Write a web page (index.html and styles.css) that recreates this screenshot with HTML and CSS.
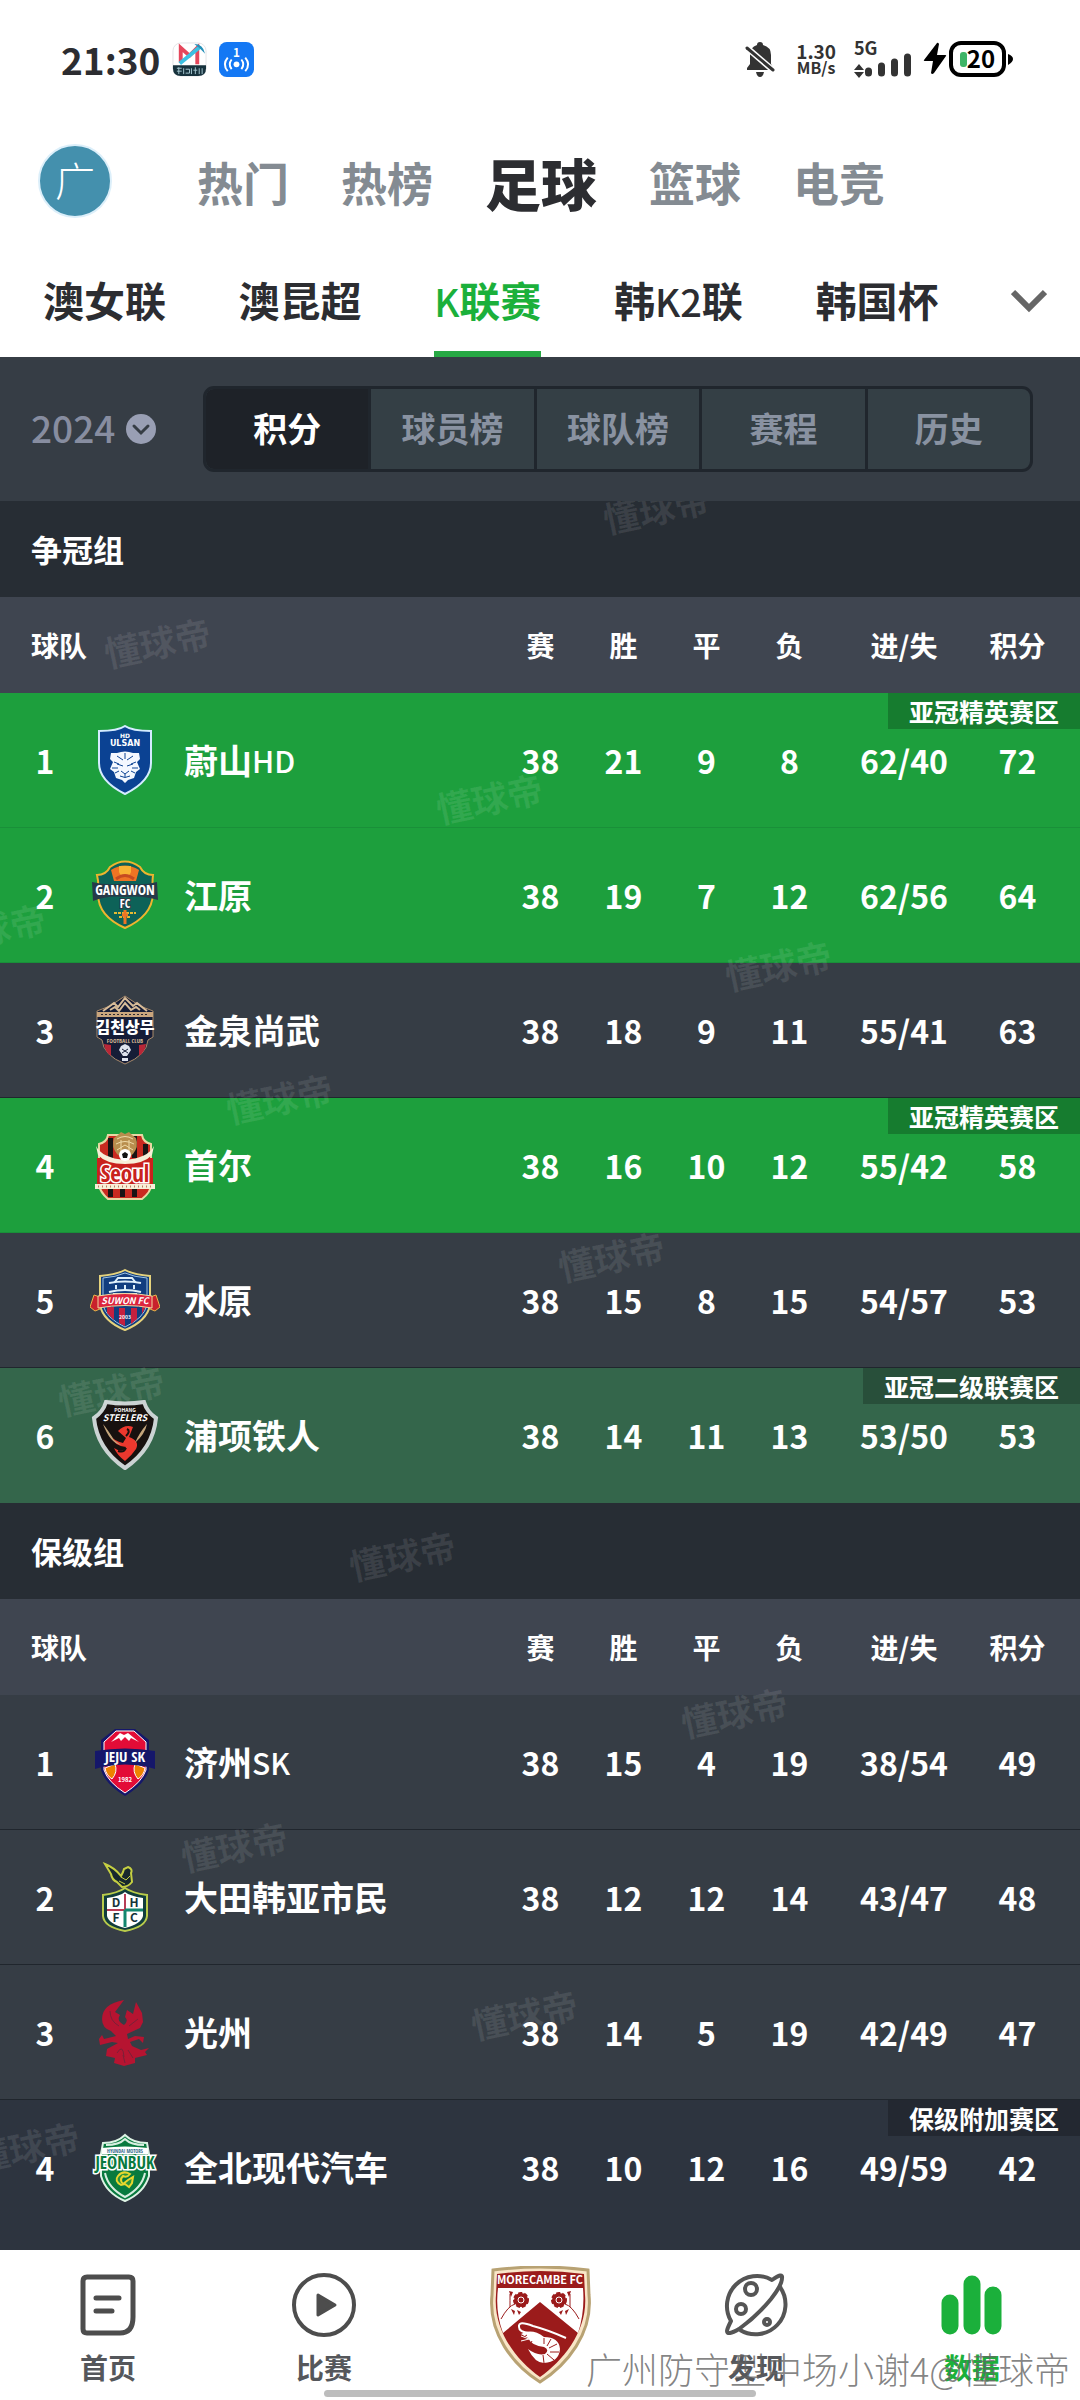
FILE: index.html
```html
<!DOCTYPE html>
<html lang="zh-CN">
<head>
  <meta charset="UTF-8">
  <meta name="viewport" content="width=device-width, initial-scale=1.0">
  <title>K联赛 积分榜</title>
  <link rel="stylesheet" href="styles.css">
</head>
<body>
  <div class="status-bar">
    <span class="clock">21:30</span>
    <svg class="app-icon" viewBox="0 0 36 36">
      <rect x="1" y="1" width="34" height="34" rx="8" fill="#fff" stroke="#e3e3e6"/>
      <path d="M1 24H35V27Q35 35 27 35H9Q1 35 1 27Z" fill="#17323d"/>
      <path d="M9 21V6L18 14L26 6V23" fill="none" stroke="#e5475c" stroke-width="4"/>
      <path d="M8 22L29 5" stroke="#3cc0e2" stroke-width="4"/>
      <path d="M23 2Q32 2 34 12L29 7Z" fill="#2590b8"/>
      <path d="M5 27h5M5 30h5M7 26v7M12 27v6M14 28h4v4h-4M20 27v6M22 29h4M24 26v7M28 27v6M31 27v6" fill="none" stroke="#a5c6cf"/>
    </svg>
    <svg class="app-icon" viewBox="0 0 36 36">
      <rect width="36" height="36" rx="8" fill="#1478f4"/>
      <text x="18" y="15" text-anchor="middle" class="icon-text" font-size="12" fill="#fff">1</text>
      <circle cx="18" cy="23" r="3" fill="#fff"/>
      <path d="M13 18Q9 23 13 28M9 16Q3 23 9 30M23 18Q27 23 23 28M27 16Q33 23 27 30" fill="none" stroke="#fff" stroke-width="2"/>
    </svg>
    <div class="status-right">
      <svg class="bell" viewBox="0 0 30 36">
        <path d="M2 29V27L5 23V14Q5 6 12 4Q12 1 15 1Q18 1 18 4Q26 6 26 14V23L29 28V29Z" fill="#333"/>
        <path d="M11 31H19Q18 36 15 36Q12 36 11 31Z" fill="#333"/>
        <path d="M0 5L30 31" stroke="#fff" stroke-width="6"/>
        <path d="M2 7L28 29" stroke="#333" stroke-width="3" stroke-linecap="round"/>
      </svg>
      <div class="speed"><span>1.30</span><small>MB/s</small></div>
      <svg class="signal" viewBox="0 0 58 36">
        <text x="0" y="14" class="icon-text" font-size="18" fill="#333">5G</text>
        <path d="M0 29L5 23L10 29ZM0 31L5 37L10 31Z" fill="#333"/>
        <path d="M14.500 30V32M27.500 25V32M40.500 21V32M53.500 16V32" stroke="#333" stroke-width="7" stroke-linecap="round"/>
      </svg>
      <svg class="battery" viewBox="0 0 90 36">
        <path d="M14 2L1 19Q0 20 2 20H10L8 32Q9 34 11 32L23 15Q24 14 22 14H14L16 3Q15 1 14 2Z" fill="#000"/>
        <rect x="28" y="2" width="53" height="32" rx="10" fill="#fff" stroke="#000" stroke-width="4"/>
        <path d="M85 13Q90 15 90 18Q90 21 85 24Z" fill="#000"/>
        <rect x="37" y="11" width="7" height="15" rx="3" fill="#3fb566"/>
        <text x="58" y="27" text-anchor="middle" class="icon-text" font-size="24" fill="#000">20</text>
      </svg>
    </div>
  </div>

  <nav class="main-tabs">
    <a class="avatar" href="#">广</a>
    <a href="#">热门</a>
    <a href="#">热榜</a>
    <a class="active" href="#">足球</a>
    <a href="#">篮球</a>
    <a href="#">电竞</a>
  </nav>

  <nav class="league-tabs">
    <a href="#">澳女联</a>
    <a href="#">澳昆超</a>
    <a class="active" href="#"><span class="latin">K</span>联赛</a>
    <a href="#">韩<span class="latin">K2</span>联</a>
    <a href="#">韩国杯</a>
    <button class="more" aria-label="更多联赛">
      <svg viewBox="0 0 36 24"><path d="M2 3L18 19L34 3" fill="none" stroke="#666" stroke-width="6"/></svg>
    </button>
  </nav>

  <div class="filters">
    <label class="season">
      <select aria-label="赛季"><option>2024</option></select>
      <svg viewBox="0 0 30 30"><circle cx="15" cy="15" r="15" fill="#999fb4"/><path d="M8 12L15 19L22 12" fill="none" stroke="#363d45" stroke-width="3" stroke-linecap="round"/></svg>
    </label>
    <div class="segments">
      <button class="active">积分</button>
      <button>球员榜</button>
      <button>球队榜</button>
      <button>赛程</button>
      <button>历史</button>
    </div>
  </div>

  <main class="standings">
    <h2>争冠组</h2>
    <table>
      <thead>
        <tr><th class="team">球队</th><th>赛</th><th>胜</th><th>平</th><th>负</th><th class="goals">进/失</th><th class="points">积分</th></tr>
      </thead>
      <tbody>
        <tr class="elite">
          <td><div class="club"><span class="rank">1</span>
            <svg class="crest" viewBox="0 0 70 70">
              <path d="M35 1Q42 6 61 6V38C61 52 49 62 35 69C21 62 9 52 9 38V6Q28 6 35 1Z" fill="#0b4293" stroke="#d4ecff" stroke-width="2"/>
              <text x="35" y="13" text-anchor="middle" class="icon-text wide" font-size="6" fill="#fff">HD</text>
              <text x="35" y="21" text-anchor="middle" class="icon-text wide" font-size="8" fill="#fff">ULSAN</text>
              <path d="M21 28L27 28Q35 25 43 28L49 28L50 34L47 37L50 44L46 47L44 53L38 55L35 58L32 55L26 53L24 47L20 44L23 37L20 34Z" fill="#f4f8ff"/>
              <path d="M27 31L33 35M43 31L37 35M35 28V34M24 37L29 39M46 37L41 39M22 43L28 43M48 43L42 43M25 48L29 46M45 48L41 46M27 39L33 41M43 39L37 41M31 46L35 49L39 46M35 49V52M30 51Q35 54 40 51" fill="none" stroke="#0b4293"/>
            </svg>
            蔚山<span class="latin">HD</span></div></td>
          <td>38</td><td>21</td><td>9</td><td>8</td><td>62/40</td><td class="points">72<span class="zone">亚冠精英赛区</span></td>
        </tr>
        <tr class="elite">
          <td><div class="club"><span class="rank">2</span>
            <svg class="crest" viewBox="0 0 70 70">
              <path d="M20 7Q35 -4 50 7Q54 15 63 15Q62 23 63 34Q62 56 35 68Q8 56 8 34Q9 23 7 15Q16 15 20 7Z" fill="#0d6258" stroke="#efb52e" stroke-width="2"/>
              <path d="M21 10Q35 1 49 10L46 21H24Z" fill="#ee7424"/>
              <path d="M29 6H41V12Q39 17 35 17Q31 17 29 12Z" fill="#f9b233"/>
              <path d="M26 19Q35 12 44 19" fill="none" stroke="#c64b21" stroke-width="3"/>
              <path d="M24 53H46M29 57H41" stroke="#e6bb33" stroke-width="2" stroke-dasharray="3 1"/>
              <path d="M35 50V64M32 55H38" stroke="#ee7424" stroke-width="3"/>
              <path d="M2 22Q18 26 35 23Q52 26 67 22L68 40Q52 35 35 37Q18 35 3 41Z" fill="#263a49"/>
              <text x="35" y="35" text-anchor="middle" class="icon-text narrow" font-size="14" fill="#fff">GANGWON</text>
              <text x="35" y="48" text-anchor="middle" class="icon-text narrow" font-size="12" fill="#fff" stroke="#263a49" stroke-width="2" paint-order="stroke">FC</text>
            </svg>
            江原</div></td>
          <td>38</td><td>19</td><td>7</td><td>12</td><td>62/56</td><td class="points">64</td>
        </tr>
        <tr>
          <td><div class="club"><span class="rank">3</span>
            <svg class="crest" viewBox="0 0 70 70">
              <path d="M35 1L20 11L7 16V42L12 45Q13 60 35 69Q57 60 58 45L63 42V16L50 11Z" fill="#161d37" stroke="#a98b6b"/>
              <path d="M13 16L24 8L28 12L35 3L43 11L47 8L57 16M20 15L25 12L29 16L35 8L41 15L46 12L50 15" fill="none" stroke="#d8bc98" stroke-width="2"/>
              <rect x="7" y="17" width="56" height="5" fill="#c9a57d"/>
              <path d="M11 19.500H59" stroke="#2a2630" stroke-dasharray="2 2"/>
              <text x="35" y="38" text-anchor="middle" class="icon-text korean" font-size="16" fill="#fff">김천상무</text>
              <text x="35" y="48" text-anchor="middle" class="icon-text narrow" font-size="6" fill="#d8bc98">FOOTBALL CLUB</text>
              <path d="M14 49L21 50V61Q15 57 14 49ZM56 49L49 50V61Q55 57 56 49Z" fill="#b82737"/>
              <path d="M31 51L35 49L39 51L41 55L37 61H33L29 55ZM32 63H38V66H32Z" fill="#dfe3ee"/>
              <path d="M32 54L38 58M38 54L32 58" stroke="#161d37"/>
            </svg>
            金泉尚武</div></td>
          <td>38</td><td>18</td><td>9</td><td>11</td><td>55/41</td><td class="points">63</td>
        </tr>
        <tr class="elite">
          <td><div class="club"><span class="rank">4</span>
            <svg class="crest" viewBox="0 0 70 70">
              <path d="M18 5H52Q53 12 61 14V55Q61 62 52 69H18Q10 62 9 55V14Q17 12 18 5Z" fill="#c92a20" stroke="#e8d9a4" stroke-width="2"/>
              <path d="M18 8H23V67H18ZM30 6H35V67H30ZM42 6H47V67H42ZM53 14H58V58H53Z" fill="#191414"/>
              <path d="M24 8L28 5L31 2L35 4L39 2L42 5L46 8Q49 17 43 24L35 30L27 24Q21 17 24 8Z" fill="#b98e4e"/>
              <path d="M27 9Q35 4 43 9M26 14Q35 9 44 14M27 20L35 15L43 20M31 10V22M39 10V22" fill="none" stroke="#f0dba9"/>
              <path d="M7 28H63V54H7Z" fill="#c9221d"/>
              <path d="M6 16Q12 28 35 30Q58 28 64 16L62 25Q54 34 35 34Q16 34 8 25Z" fill="#f7efd8"/>
              <circle cx="35" cy="25" r="6" fill="#fff"/>
              <path d="M35 22L38 24L37 28H33L32 24Z" fill="#111"/>
              <text x="35" y="52" text-anchor="middle" class="icon-text narrow" font-size="23" fill="#c9221d" stroke="#fff" stroke-width="3" paint-order="stroke">Seoul</text>
              <rect x="5" y="54" width="60" height="5" fill="#f7efd8"/>
              <path d="M8 56.500H62" stroke="#bb7d61" stroke-width="2" stroke-dasharray="1 3"/>
            </svg>
            首尔</div></td>
          <td>38</td><td>16</td><td>10</td><td>12</td><td>55/42</td><td class="points">58<span class="zone">亚冠精英赛区</span></td>
        </tr>
        <tr>
          <td><div class="club"><span class="rank">5</span>
            <svg class="crest" viewBox="0 0 70 70">
              <path d="M35 5Q44 10 60 11V40Q57 56 35 65Q13 56 10 40V11Q26 10 35 5Z" fill="#113e7f" stroke="#e6d37c" stroke-width="2"/>
              <path d="M35 8Q44 12 57 13V40Q54 53 35 62Q16 53 13 40V13Q26 12 35 8Z" fill="none" stroke="#9fc4e4"/>
              <path d="M19 18Q35 15 51 18M24 18L28 13H42L46 18M19 27Q35 23 51 27M26 20V24M35 20V24M44 20V24M23 29H47" fill="none" stroke="#dff0fa" stroke-width="2"/>
              <path d="M17 42H24V55L17 48ZM29 43H35V61L29 58ZM41 43H47V54L41 59ZM52 41H56L52 49Z" fill="#c5203f"/>
              <path d="M0 42L4 30L10 32V44L5 46ZM70 42L66 30L60 32V44L65 46Z" fill="#c8212c" stroke="#e6b64a"/>
              <path d="M8 31Q35 26 62 31V43Q35 38 8 43Z" fill="#dc243e" stroke="#f0d9a0"/>
              <text x="35" y="39" text-anchor="middle" class="icon-text slanted" font-size="9" fill="#fff">SUWON FC</text>
              <text x="35" y="54" text-anchor="middle" class="icon-text" font-size="5" fill="#fff">2003</text>
            </svg>
            水原</div></td>
          <td>38</td><td>15</td><td>8</td><td>15</td><td>54/57</td><td class="points">53</td>
        </tr>
        <tr class="second">
          <td><div class="club"><span class="rank">6</span>
            <svg class="crest" viewBox="0 0 70 70">
              <path d="M16 2Q35 5 54 2Q57 12 66 18Q63 49 35 68Q7 49 4 18Q13 12 16 2Z" fill="#17110f" stroke="#cbd3d3" stroke-width="4"/>
              <text x="35" y="12" text-anchor="middle" class="icon-text" font-size="5" fill="#fff">POHANG</text>
              <text x="35" y="21" text-anchor="middle" class="icon-text slanted" font-size="9" fill="#fff">STEELERS</text>
              <path d="M20 35Q24 41 33 43L36 38L28 31Q35 24 43 27L39 37Q50 41 46 49Q42 55 35 61Q27 55 24 48Q33 54 36 47Q24 46 20 35Z" fill="#ec382e"/>
              <path d="M13 24Q18 30 24 40L31 45Q20 43 13 24ZM57 24Q55 34 45 43Q49 33 57 24Z" fill="#c4a57b"/>
              <path d="M37 29Q41 31 36 36M36 48Q34 53 28 51" fill="none" stroke="#17110f" stroke-width="2"/>
            </svg>
            浦项铁人</div></td>
          <td>38</td><td>14</td><td>11</td><td>13</td><td>53/50</td><td class="points">53<span class="zone">亚冠二级联赛区</span></td>
        </tr>
      </tbody>
    </table>

    <h2>保级组</h2>
    <table>
      <thead>
        <tr><th class="team">球队</th><th>赛</th><th>胜</th><th>平</th><th>负</th><th class="goals">进/失</th><th class="points">积分</th></tr>
      </thead>
      <tbody>
        <tr>
          <td><div class="club"><span class="rank">1</span>
            <svg class="crest" viewBox="0 0 70 70">
              <path d="M25 2H45L59 13V43Q55 57 35 69Q15 57 11 43V13Z" fill="#15176a"/>
              <path d="M26 4H44L56 15V43Q52 55 35 66Q18 55 14 43V15Z" fill="#e30c37" stroke="#fff"/>
              <path d="M21 15L30 6L34 8L38 6L49 15L41 11L39 14L35 10L31 14L29 11Z" fill="#fff"/>
              <path d="M15 41L25 37Q28 45 22 52Q16 48 15 41ZM55 41L45 37Q42 45 48 52Q54 48 55 41Z" fill="#ee8200" stroke="#fff"/>
              <path d="M5 24Q35 19 65 24V42L58 40Q35 35 12 40L5 42Z" fill="#15176a"/>
              <text x="35" y="35" text-anchor="middle" class="icon-text narrow" font-size="15" fill="#fff">JEJU SK</text>
              <text x="35" y="55" text-anchor="middle" class="icon-text" font-size="6" fill="#fff">1982</text>
            </svg>
            济州<span class="latin">SK</span></div></td>
          <td>38</td><td>15</td><td>4</td><td>19</td><td>38/54</td><td class="points">49</td>
        </tr>
        <tr>
          <td><div class="club"><span class="rank">2</span>
            <svg class="crest" viewBox="0 0 70 70">
              <path d="M27 20Q22 18 21 12L15 2Q25 6 31 14L33 10L34 7L38 5Q43 7 41 11L42 20Q38 25 32 25Z" fill="#17282d" stroke="#c5cf42" stroke-width="2"/>
              <path d="M31 15L36 18L40 14M29 19L35 22" fill="none" stroke="#c5cf42"/>
              <path d="M13 33Q28 31 35 26Q42 31 57 33V54Q56 65 35 69Q14 65 13 54Z" fill="#113d3c" stroke="#b9cc4b" stroke-width="2"/>
              <path d="M17 36Q30 34 35 30Q40 34 53 36V54Q51 62 35 66Q19 62 17 54Z" fill="#fff"/>
              <path d="M35 32V48M17 48H35" stroke="#b83c55" stroke-width="2"/>
              <path d="M35 48V65M35 48H53" stroke="#12866e" stroke-width="3"/>
              <g class="icon-text" font-size="12" text-anchor="middle" fill="#15343a"><text x="26" y="45">D</text><text x="44" y="45">H</text><text x="26" y="60">F</text><text x="44" y="60">C</text></g>
            </svg>
            大田韩亚市民</div></td>
          <td>38</td><td>12</td><td>12</td><td>14</td><td>43/47</td><td class="points">48</td>
        </tr>
        <tr>
          <td><div class="club"><span class="rank">3</span>
            <svg class="crest" viewBox="0 0 70 70">
              <path d="M34 3Q12 7 12 22Q12 31 21 34L26 39L14 42L12 38L9 42L10 48L22 45L28 46L17 52L16 59L25 61L24 66L34 69L45 66L45 61L57 58L55 55L59 51L51 53L42 49L40 45L49 42L53 46L54 40L45 39L38 42L37 37L50 31L53 25L52 16L46 5L43 17L37 13L35 20Q39 24 34 28Q26 24 30 18L25 15Z" fill="#b61431"/>
              <path d="M20 14Q20 24 29 29M48 22L39 29M27 56Q33 46 34 60M38 53L43 61M33 58L35 66" fill="none" stroke="#7a2038"/>
            </svg>
            光州</div></td>
          <td>38</td><td>14</td><td>5</td><td>19</td><td>42/49</td><td class="points">47</td>
        </tr>
        <tr class="playoff">
          <td><div class="club"><span class="rank">4</span>
            <svg class="crest" viewBox="0 0 70 70">
              <path d="M35 3Q43 11 57 11L59 22V44Q54 61 35 69Q16 61 11 44V22L13 11Q27 11 35 3Z" fill="#087a3e" stroke="#ddf3e5" stroke-width="2"/>
              <path d="M16 13Q29 13 35 7Q41 13 54 13M15 41Q18 56 35 65Q52 56 55 41" fill="none" stroke="#d7eee0" stroke-width="2"/>
              <path d="M12 16Q35 13 58 16V22H12Z" fill="#fff"/>
              <text x="35" y="21" text-anchor="middle" class="icon-text narrow" font-size="5" fill="#2d6787">HYUNDAI MOTORS</text>
              <text x="35" y="37" text-anchor="middle" class="icon-text narrow" font-size="17" fill="#087a3e" stroke="#fff" stroke-width="3" paint-order="stroke">JEONBUK</text>
              <path d="M31 53Q24 49 28 44Q33 38 40 42Q37 46 33 44Q29 48 33 52L38 48L43 45L42 51L39 55L35 52Z" fill="#2c933b" stroke="#e7d72e" stroke-width="2"/>
            </svg>
            全北现代汽车</div></td>
          <td>38</td><td>10</td><td>12</td><td>16</td><td>49/59</td><td class="points">42<span class="zone">保级附加赛区</span></td>
        </tr>
      </tbody>
    </table>

    <div class="watermarks" aria-hidden="true">
      <span style="left: 656px; top: 6px">懂球帝</span>
      <span style="left: 157px; top: 140px">懂球帝</span>
      <span style="left: 489px; top: 296px">懂球帝</span>
      <span style="left: -8px; top: 426px">懂球帝</span>
      <span style="left: 778px; top: 463px">懂球帝</span>
      <span style="left: 279px; top: 596px">懂球帝</span>
      <span style="left: 611px; top: 754px">懂球帝</span>
      <span style="left: 111px; top: 888px">懂球帝</span>
      <span style="left: 402px; top: 1053px">懂球帝</span>
      <span style="left: 734px; top: 1210px">懂球帝</span>
      <span style="left: 234px; top: 1344px">懂球帝</span>
      <span style="left: 524px; top: 1512px">懂球帝</span>
      <span style="left: 26px; top: 1644px">懂球帝</span>
    </div>
  </main>

  <nav class="bottom-nav">
    <a href="#">
      <svg class="nav-icon" viewBox="0 0 64 64"><path d="M11 4H53Q57 4 57 8V44Q57 60 44 60H11Q7 60 7 56V8Q7 4 11 4ZM20 25H43M20 38H36" fill="none" stroke="#4d4d4d" stroke-width="5" stroke-linecap="round"/></svg>
      首页
    </a>
    <a href="#">
      <svg class="nav-icon" viewBox="0 0 64 64"><circle cx="32" cy="32" r="30" fill="none" stroke="#4d4d4d" stroke-width="4"/><path d="M26 22L43 32L26 42Z" fill="#4d4d4d" stroke="#4d4d4d" stroke-width="3" stroke-linejoin="round"/></svg>
      比赛
    </a>
    <a class="team-link" href="#" aria-label="Morecambe FC">
      <svg class="team-crest" viewBox="0 0 101 118">
        <path d="M3 4Q50 -2 98 4L99 29C103 67 77 99 50 116C23 99 -2 67 2 29Z" fill="#f9e6c8" stroke="#b8a273" stroke-width="3"/>
        <path d="M7 8Q50 2 94 8L95 29C98 64 74 94 50 111C26 94 3 64 6 29Z" fill="#9b1b1b"/>
        <path d="M8 22H93Q95 46 88 67L50 36L13 67Q5 46 8 22Z" fill="#fff"/>
        <text x="50" y="18" text-anchor="middle" class="icon-text" font-size="11" fill="#fff">MORECAMBE FC</text>
        <g fill="#9b1b1b">
          <circle cx="31" cy="34" r="7" stroke="#9b1b1b" stroke-width="2" stroke-dasharray="4 2"/>
          <circle cx="69" cy="34" r="7" stroke="#9b1b1b" stroke-width="2" stroke-dasharray="4 2"/>
          <path d="M19 25L23 26L21 31ZM81 25L77 26L79 31ZM21 43L25 45L24 49ZM27 44L31 46L29 49ZM79 43L75 45L76 49ZM73 44L69 46L71 49Z"/>
        </g>
        <path d="M11 53Q18 40 25 38M20 28Q20 34 20 41M89 53Q82 40 75 38M80 28V41" fill="none" stroke="#9b1b1b"/>
        <circle cx="31" cy="34" r="3" fill="#9b1b1b" stroke="#fff"/>
        <circle cx="69" cy="34" r="3" fill="#9b1b1b" stroke="#fff"/>
        <path d="M76 72Q58 64 43 60Q28 54 29 61Q29 66 39 67" fill="none" stroke="#fff" stroke-width="2"/>
        <path d="M31 68Q42 62 54 71Q69 71 70 83Q69 96 54 97Q45 97 38 83Q47 90 55 88Q60 84 54 81Q42 80 38 72Z" fill="#fff"/>
        <path d="M37 69L31 73M39 73L33 79M42 75L37 84M54 72V78M61 73L57 80M67 78L59 82M69 86L60 86M64 94L57 88M54 97L53 89" stroke="#9b1b1b"/>
        <path d="M31 70L39 73L31 75" fill="none" stroke="#fff"/>
      </svg>
    </a>
    <a href="#">
      <svg class="nav-icon" viewBox="0 0 64 64">
        <g fill="none" stroke="#555" stroke-width="4" stroke-linejoin="round">
          <path d="M7 48A30 30 0 0 1 48 7Q59 -1 58 5Q58 12 47 26Q33 43 15 56Q3 63 3 58Q3 56 7 48Z"/>
          <path d="M56 14A30 30 0 0 1 16 57"/>
          <circle cx="27" cy="16" r="6"/>
          <circle cx="17" cy="36" r="5"/>
          <circle cx="43" cy="49" r="3"/>
        </g>
      </svg>
      发现
    </a>
    <a class="active" href="#">
      <svg class="nav-icon" viewBox="0 0 64 64"><path d="M10 30V53M32 11V53M53 22V53" stroke="#1bb03b" stroke-width="17" stroke-linecap="round"/></svg>
      数据
    </a>
    <span class="home-indicator"></span>
    <span class="credit">广州防守型中场小谢4@懂球帝</span>
  </nav>
</body>
</html>
```
FILE: styles.css
```css
* {
  box-sizing: border-box;
}
:root {
  --green: #1d9f3d;
  --panel: #363d45;
  --line: #20262d;
  --ink: #2c2d31;
  --muted: #848b92;
}
body {
  margin: 0;
  min-height: 100vh;
  display: flex;
  flex-direction: column;
  font-family: "Noto Sans CJK SC", "Noto Sans", sans-serif;
  font-weight: 700;
  color: var(--ink);
  background: #fff;
}
a {
  color: inherit;
  text-decoration: none;
}
button, select {
  font: inherit;
  color: inherit;
  border: none;
  background: none;
  padding: 0;
}
svg {
  display: block;
}
.icon-text {
  font-family: "Noto Sans CJK SC", sans-serif;
  font-weight: 700;
}
.narrow {
  font-family: "Open Sans Condensed", "DejaVu Sans Condensed", "Liberation Sans Narrow", sans-serif;
}
.wide {
  font-family: "DejaVu Sans", sans-serif;
}
.korean {
  font-family: "Noto Sans CJK KR", sans-serif;
  font-weight: 900;
}
.slanted {
  font-style: italic;
}

/* status bar */
.status-bar {
  height: 118px;
  padding: 0 67px 0 61px;
  display: flex;
  align-items: center;
  gap: 12px;
}
.clock {
  font-size: 37px;
  line-height: 40px;
}
.app-icon {
  width: 35px;
  height: 35px;
}
.status-right {
  display: flex;
  align-items: center;
  margin-left: auto;
}
.bell {
  width: 30px;
  height: 36px;
}
.speed {
  display: flex;
  flex-direction: column;
  align-items: center;
  margin: 0 18px 0 21px;
  font-size: 19px;
  line-height: 17px;
  color: #333;
}
.speed small {
  font-size: 16px;
}
.signal {
  width: 58px;
  height: 36px;
  overflow: visible;
}
.battery {
  width: 90px;
  height: 36px;
  margin-left: 11px;
}

/* top navigation */
.main-tabs {
  height: 126px;
  padding-left: 38px;
  display: flex;
  align-items: center;
  gap: 52px;
  font-size: 46px;
  color: var(--muted);
}
.main-tabs .active {
  font-size: 56px;
  font-weight: 900;
  color: var(--ink);
}
.main-tabs .avatar {
  width: 74px;
  height: 74px;
  margin-right: 33px;
  border: 2px solid #dceffa;
  border-radius: 50%;
  background: #4490ad;
  color: #fff;
  font-size: 40px;
  font-weight: 300;
  line-height: 66px;
  text-align: center;
}
.league-tabs {
  height: 113px;
  padding: 0 33px 0 43px;
  display: flex;
  align-items: stretch;
  justify-content: space-between;
  font-size: 41px;
  line-height: 111px;
}
.league-tabs .active {
  color: #1bb03b;
  box-shadow: inset 0 -6px #27a844;
}
.league-tabs .latin {
  font-size: 38px;
  font-weight: 500;
}
.more svg {
  width: 36px;
  height: 24px;
}

/* season and view filters */
.filters {
  padding: 29px 47px 29px 31px;
  display: flex;
  align-items: center;
  gap: 47px;
  background: var(--panel);
}
.season {
  display: flex;
  align-items: center;
  gap: 10px;
  color: #878da0;
  font-size: 37px;
  font-weight: 500;
  line-height: 48px;
}
.season select {
  appearance: none;
  padding-bottom: 4px;
}
.season svg {
  width: 30px;
  height: 30px;
}
.segments {
  flex: 1;
  height: 86px;
  display: flex;
  border: 3px solid var(--line);
  border-radius: 11px;
  overflow: hidden;
  background: #343f45;
}
.segments button {
  flex: 1;
  padding-bottom: 3px;
  font-size: 34px;
  color: #8992a1;
}
.segments button + button {
  border-left: 3px solid var(--line);
}
.segments .active {
  background: #1e2228;
  color: #fff;
}

/* tables */
.standings {
  position: relative;
  flex: 1;
  overflow: hidden;
  background: #2d343f;
  color: #fff;
}
.standings h2 {
  margin: 0;
  padding-left: 31px;
  font-size: 31px;
  line-height: 96px;
  background: #272d34;
}
table {
  width: 100%;
  table-layout: fixed;
  border-collapse: collapse;
}
th {
  width: 83px;
  height: 96px;
  padding: 0;
  font-size: 28px;
  background: #3f4550;
}
th.team {
  width: auto;
  padding-left: 31px;
  text-align: left;
}
th.goals {
  width: 146px;
}
th.points {
  width: 103px;
}
td {
  height: 135px;
  padding: 0 0 2px;
  font-size: 32px;
  text-align: center;
  background: var(--panel);
  box-shadow: inset 0 -1px var(--line);
}
.points {
  position: relative;
  padding-right: 22px;
}
.elite td {
  background: var(--green);
  box-shadow: inset 0 -1px #199039;
}
.second td {
  background: #34664b;
  box-shadow: none;
}
.playoff td {
  background: #2d343f;
  box-shadow: none;
}
.club {
  display: flex;
  align-items: center;
  font-size: 34px;
}
.club .latin {
  font-size: 30px;
  font-weight: 500;
}
.rank {
  width: 90px;
  font-size: 32px;
}
.crest {
  width: 70px;
  height: 70px;
  margin-right: 24px;
}
.zone {
  position: absolute;
  top: 0;
  right: 0;
  padding: 0 21px;
  font-size: 25px;
  line-height: 36px;
  white-space: nowrap;
  background: rgba(0, 0, 0, 0.22);
}
.watermarks span {
  position: absolute;
  font-size: 36px;
  font-weight: 700;
  line-height: 40px;
  white-space: nowrap;
  color: rgba(255, 255, 255, 0.09);
  transform: translate(-50%, -50%) rotate(-12deg);
  pointer-events: none;
}

/* bottom navigation */
.bottom-nav {
  position: relative;
  height: 150px;
  display: flex;
  background: #fff;
  font-size: 28px;
  line-height: 36px;
  color: #55575b;
}
.bottom-nav a {
  flex: 1;
  padding-top: 23px;
  display: flex;
  flex-direction: column;
  align-items: center;
  gap: 12px;
}
.bottom-nav .active {
  color: #1bb03b;
}
.bottom-nav .team-link {
  padding-top: 16px;
}
.nav-icon {
  width: 64px;
  height: 64px;
  overflow: visible;
}
.team-crest {
  width: 101px;
  height: 118px;
}
.home-indicator {
  position: absolute;
  left: 30%;
  right: 30%;
  bottom: 3px;
  height: 7px;
  border-radius: 4px;
  background: #bdbdbd;
}
.credit {
  position: absolute;
  right: 10px;
  bottom: 12px;
  font-size: 36px;
  font-weight: 300;
  line-height: 40px;
  white-space: nowrap;
  color: rgba(100, 100, 100, 0.8);
}
```
